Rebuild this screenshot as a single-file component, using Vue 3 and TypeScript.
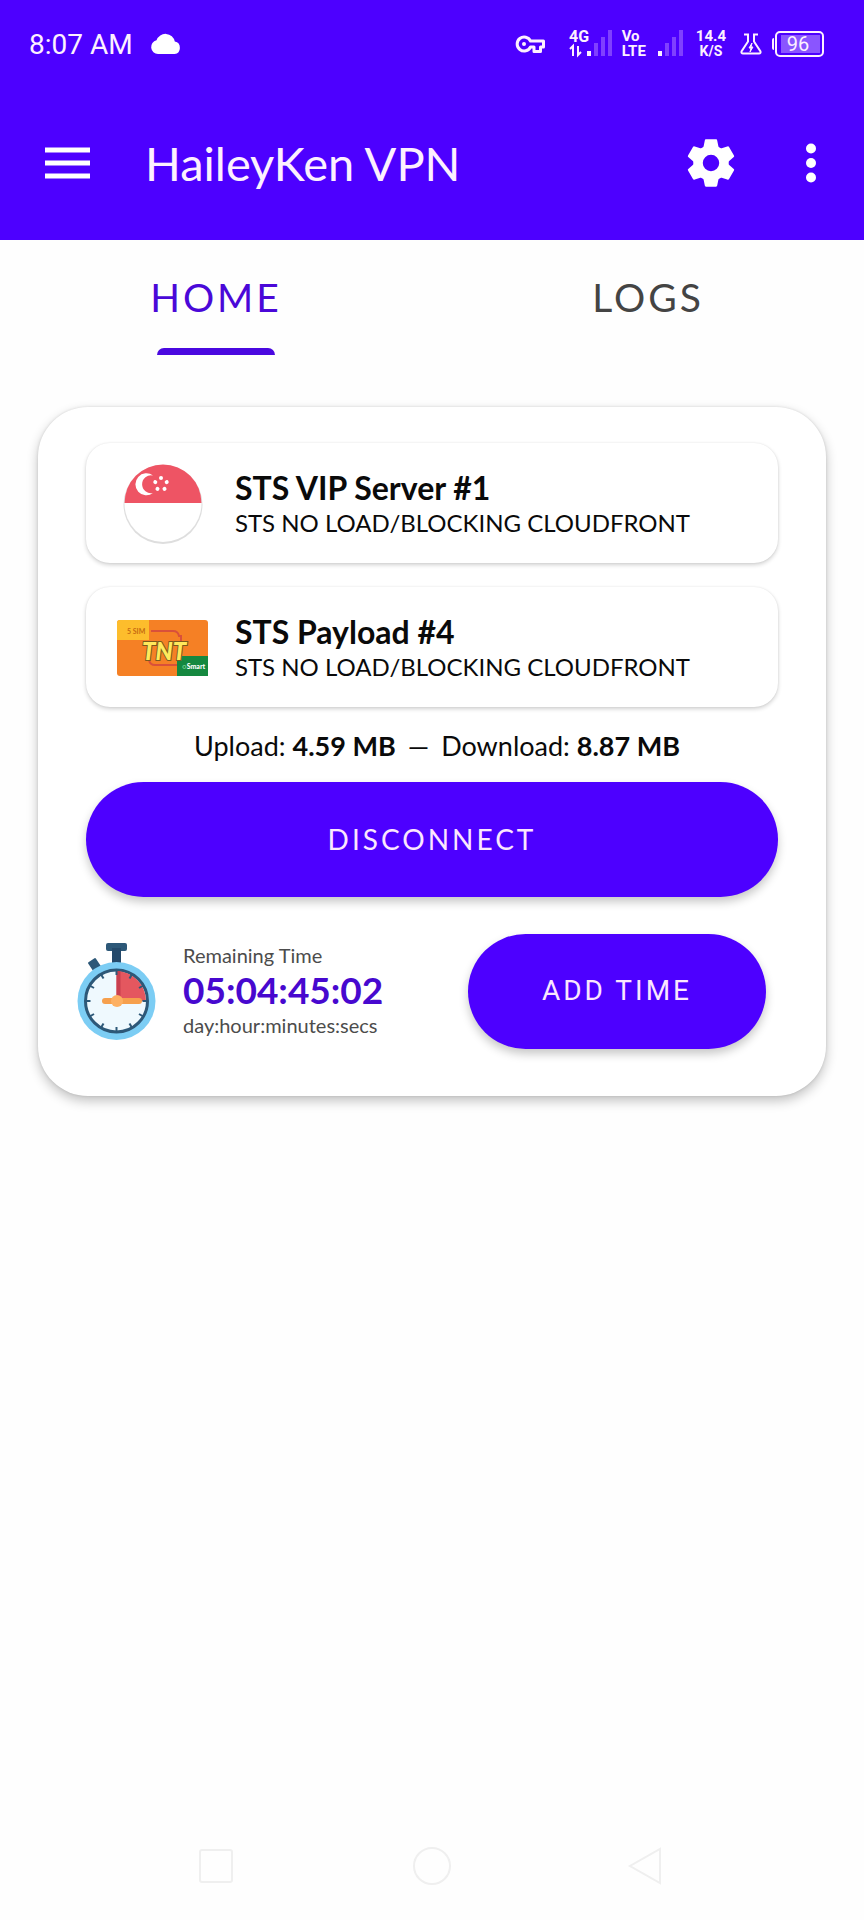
<script setup lang="ts">
import { ref } from 'vue'

type Tab = 'HOME' | 'LOGS'

const tabs: Tab[] = ['HOME', 'LOGS']
const active = ref<Tab>('HOME')
const upload = '4.59 MB'
const download = '8.87 MB'
const remaining = '05:04:45:02'
const teeth = [0, 60, 120, 180, 240, 300]
const ticks = Array.from({ length: 12 }, (_, i) => i * 30)
const stars = [0, 72, 144, 216, 288]
</script>

<template>
  <div class="screen">
    <header class="top">
      <div class="status">
        <span class="clock">8:07 AM</span>
        <svg class="cloud" viewBox="0 0 30 20" width="30" height="20" aria-hidden="true">
          <path d="M7 20a7 7 0 0 1-1.500-13.800A9.500 9.500 0 0 1 23.800 7.600 6.300 6.300 0 0 1 23.600 20z" fill="currentColor" />
        </svg>
        <span class="spacer"></span>
        <svg class="key" viewBox="0 0 30 20" width="30" height="20" aria-hidden="true">
          <path d="M15.500 7A7 7 0 1 0 15.500 13H19V17.500H25.500V13H28.500V7z" fill="none" stroke="currentColor" stroke-width="3" stroke-linejoin="round" />
          <circle cx="9" cy="10" r="2" fill="currentColor" />
        </svg>
        <svg class="net" viewBox="0 0 44 28" width="44" height="28" role="img" aria-label="4G signal">
          <text x="0" y="12" class="mini">4G</text>
          <path d="M1 19l3-3v10M9 16v9l3-3" fill="none" stroke="currentColor" stroke-width="2" />
          <rect x="18" y="21" width="4" height="5" fill="currentColor" />
          <g class="dim">
            <rect x="25" y="13" width="4" height="13" />
            <rect x="32" y="7" width="4" height="19" />
            <rect x="39" y="0" width="4" height="26" />
          </g>
        </svg>
        <span class="stack volte"><span>Vo</span><span>LTE</span></span>
        <svg class="bars" viewBox="0 0 26 28" width="26" height="28" role="img" aria-label="Signal">
          <rect x="0" y="21" width="4" height="5" fill="currentColor" />
          <g class="dim">
            <rect x="7" y="13" width="4" height="13" />
            <rect x="14" y="7" width="4" height="19" />
            <rect x="21" y="0" width="4" height="26" />
          </g>
        </svg>
        <span class="stack speed"><span>14.4</span><small>K/S</small></span>
        <svg class="flask" viewBox="0 0 22 22" width="22" height="22" aria-hidden="true">
          <path d="M4 1.500h4v7L1.500 18.500q-.5 2 1.500 2h16q2 0 1.500-2L14 8.500v-7h4" fill="none" stroke="currentColor" stroke-width="2" />
          <path d="M12 10l-3 5h2l-1 4 3-5h-2z" fill="currentColor" stroke="currentColor" stroke-width="1" />
        </svg>
        <svg class="battery" viewBox="0 0 53 26" width="53" height="26" role="img" aria-label="Battery 96">
          <path d="M3 7q-2 0-2 2v8q0 2 2 2z" fill="currentColor" />
          <rect x="5" y="1" width="47" height="24" rx="4" fill="none" stroke="currentColor" stroke-width="2" />
          <rect x="10" y="4" width="39" height="18" fill="#8a55ff" />
          <text x="27" y="20" text-anchor="middle" class="level">96</text>
        </svg>
      </div>
      <div class="appbar">
        <button class="icon menu" aria-label="Open menu">
          <svg viewBox="0 0 46 32" width="46" height="32"><path d="M0 3h45M0 16h45M0 29h45" stroke="currentColor" stroke-width="5" /></svg>
        </button>
        <h1>HaileyKen VPN</h1>
        <button class="icon" aria-label="Settings">
          <svg viewBox="-73 -73 146 146" width="48" height="48">
            <path v-for="a in teeth" :key="a" d="M-15-72H15Q19-72 19-68L24-43H-24L-19-68Q-19-72-15-72z" :transform="`rotate(${a})`" fill="currentColor" />
            <circle r="39.500" fill="none" stroke="currentColor" stroke-width="29" />
          </svg>
        </button>
        <button class="icon more" aria-label="More options">
          <svg viewBox="0 0 12 40" width="12" height="40" fill="currentColor">
            <circle cx="6" cy="5.500" r="5" /><circle cx="6" cy="20" r="5" /><circle cx="6" cy="34.500" r="5" />
          </svg>
        </button>
      </div>
    </header>

    <nav class="tabs" role="tablist">
      <button v-for="t in tabs" :key="t" role="tab" class="tab" :class="{ active: active === t }" :aria-selected="active === t" @click="active = t">
        <span>{{ t }}</span>
      </button>
    </nav>

    <main class="card">
      <button class="row">
        <svg class="thumb" viewBox="86 38 96 96" width="96" height="96" aria-hidden="true">
          <circle cx="134" cy="87.500" r="39.500" fill="#dedede" />
          <circle cx="134" cy="86.500" r="38.500" fill="#fff" />
          <path d="M95.500 86a38.500 38.500 0 0 1 77 0z" fill="#ee5464" />
          <path d="M124 58.500a11 11 0 1 0 0 17.600 9 9 0 1 1 0-17.600z" fill="#fff" />
          <circle v-for="a in stars" :key="a" cx="132" cy="61" r="2" :transform="`rotate(${a} 132 67)`" fill="#fff" />
        </svg>
        <span class="info"><strong>STS VIP Server #1</strong><span>STS NO LOAD/BLOCKING CLOUDFRONT</span></span>
      </button>
      <button class="row">
        <svg class="thumb" viewBox="0 -1 96 96" width="96" height="96" aria-hidden="true">
          <rect x="2" y="20" width="91" height="56" rx="3" fill="#f58025" />
          <path d="M5 20h29v20H2V23q0-3 3-3z" fill="#fdbd2c" />
          <text x="12" y="34" class="sim">5 SIM</text>
          <path d="M36 31h22q5 0 6 5h2v25q0 4-4 4H40q-5 0-6-5" fill="none" stroke="#d9503a" stroke-width="2" />
          <path d="M62 56h31v20H62z" fill="#15883f" />
          <text x="27" y="60" class="tnt">TNT</text>
          <text x="67" y="69" class="smart"><tspan class="ring">○</tspan>Smart</text>
        </svg>
        <span class="info"><strong>STS Payload #4</strong><span>STS NO LOAD/BLOCKING CLOUDFRONT</span></span>
      </button>

      <p class="traffic">
        <span>Upload: <b>{{ upload }}</b></span><span>—</span><span>Download: <b>{{ download }}</b></span>
      </p>

      <button class="pill">DISCONNECT</button>

      <section class="time">
        <svg viewBox="0 0 80 98" width="80" height="98" aria-hidden="true">
          <path d="M12 20l6-4 6 9-6 4z" fill="#2d5878" stroke="#2d5878" stroke-width="2" stroke-linejoin="round" />
          <rect x="29" y="0" width="21" height="8" rx="2" fill="#2d5878" />
          <rect x="35" y="5" width="9" height="16" fill="#24496a" />
          <circle cx="39.500" cy="58" r="39" fill="#7ccdf4" />
          <circle cx="39.500" cy="58" r="31" fill="#eff9fe" stroke="#2d5878" stroke-width="3" />
          <path d="M39.500 28a30 30 0 0 1 29.500 30H39.500z" fill="#e4575f" />
          <path d="M39.500 28h4v30h-4z" fill="#c9404f" />
          <path v-for="a in ticks" :key="a" d="M39.500 27v5" :transform="`rotate(${a} 39.500 58)`" stroke="#2d5878" stroke-width="2" />
          <path d="M28 58h34" stroke="#f6a04d" stroke-width="6" stroke-linecap="round" />
          <circle cx="40" cy="58" r="6" fill="#fdb062" />
        </svg>
        <div class="readout">
          <span>Remaining Time</span>
          <strong>{{ remaining }}</strong>
          <span>day:hour:minutes:secs</span>
        </div>
        <button class="pill add">ADD TIME</button>
      </section>
    </main>

    <footer class="nav">
      <button aria-label="Recent apps"><svg viewBox="0 0 40 40" width="40" height="40"><rect x="4" y="4" width="32" height="32" rx="2" /></svg></button>
      <button aria-label="Home"><svg viewBox="0 0 40 40" width="40" height="40"><circle cx="20" cy="20" r="18" /></svg></button>
      <button aria-label="Back"><svg viewBox="0 0 40 40" width="40" height="40"><path d="M32 3v34L2 20z" /></svg></button>
    </footer>
  </div>
</template>

<style>
body {
  margin: 0;
  background: #fefefe;
}
</style>

<style scoped>
.screen {
  min-height: 100vh;
  display: flex;
  flex-direction: column;
  font-family: Lato, 'Open Sans', sans-serif;
  color: #0a0a0a;
}
button {
  font: inherit;
  color: inherit;
  border: 0;
  padding: 0;
  background: none;
  cursor: pointer;
}
svg {
  display: block;
  flex: none;
  overflow: visible;
}
.top {
  background: #4d00ff;
  color: #fdf0ff;
}
.status {
  display: flex;
  align-items: center;
  height: 88px;
  padding: 0 40px 0 29px;
  font-family: Roboto, sans-serif;
}
.clock {
  font-size: 28px;
}
.cloud {
  margin-left: 18px;
}
.cloud,
.icon {
  color: #fff;
}
.spacer {
  flex: 1;
}
.net {
  margin-left: 24px;
}
.mini {
  font: 700 16px Roboto, sans-serif;
  fill: currentColor;
}
.dim {
  fill: #8040ff;
}
.stack {
  display: flex;
  flex-direction: column;
  align-items: center;
  font-size: 15px;
  line-height: 15px;
  font-weight: 700;
}
.volte {
  margin-left: 9px;
  align-items: flex-start;
}
.bars {
  margin-left: 12px;
}
.speed {
  margin-left: 12px;
}
.stack small {
  font-size: 14px;
}
.flask {
  margin-left: 14px;
}
.battery {
  margin-left: 9px;
}
.level {
  font: 20px Roboto, sans-serif;
  fill: currentColor;
}
.appbar {
  display: flex;
  align-items: center;
  height: 152px;
  padding: 0 47px 0 45px;
  box-sizing: border-box;
  padding-bottom: 2px;
}
h1 {
  flex: 1;
  margin: 0 0 0 54px;
  font-size: 47px;
  font-weight: 400;
}
.more {
  margin-left: 70px;
}
.tabs {
  display: flex;
}
.tab {
  flex: 1;
  height: 115px;
  display: flex;
  flex-direction: column;
  align-items: center;
  font-size: 39px;
  line-height: 48px;
  letter-spacing: 3px;
  color: #444;
}
.tab span {
  margin-top: 33px;
}
.active {
  color: #4a08d8;
}
.active::after {
  content: '';
  width: 118px;
  height: 7px;
  margin-top: auto;
  border-radius: 7px 7px 0 0;
  background: #4a08e0;
}
.card {
  margin: 52px 38px 0;
  padding: 36px 48px 47px;
  border-radius: 50px;
  background: #fff;
  box-shadow: 0 5px 12px rgba(0, 0, 0, 0.24), 0 0 3px rgba(0, 0, 0, 0.12);
}
.row {
  display: flex;
  align-items: center;
  width: 100%;
  height: 120px;
  margin-bottom: 24px;
  padding: 0 29px;
  gap: 24px;
  border-radius: 24px;
  background: #fff;
  box-shadow: 0 2px 4px rgba(0, 0, 0, 0.18), 0 0 2px rgba(0, 0, 0, 0.08);
  text-align: left;
}
.info {
  display: flex;
  flex-direction: column;
  font-size: 24px;
  line-height: 30px;
}
.info strong {
  font-size: 32px;
  line-height: 40px;
}
.sim {
  font: 700 7px Lato, sans-serif;
  fill: #c56a10;
}
.tnt {
  font: italic 900 24px Lato, sans-serif;
  fill: #ffe95c;
  stroke: #7a5a1c;
  stroke-width: 2px;
  paint-order: stroke;
}
.smart {
  font: 900 7px Lato, sans-serif;
  fill: #fff;
}
.ring {
  fill: #6fce8d;
}
.traffic {
  display: flex;
  justify-content: center;
  gap: 12px;
  margin: 0;
  padding-left: 10px;
  font-size: 27px;
  line-height: 30px;
}
.pill {
  display: block;
  width: 100%;
  height: 115px;
  margin-top: 21px;
  padding-bottom: 2px;
  border-radius: 58px;
  background: #4d00ff;
  color: #fbe6ff;
  font-size: 28px;
  letter-spacing: 3px;
  box-shadow: 0 5px 10px rgba(0, 0, 0, 0.22);
}
.time {
  display: flex;
  align-items: center;
  margin: 37px -9px 0;
}
.readout {
  flex: 1;
  display: flex;
  flex-direction: column;
  margin: 0 0 4px 26px;
  font-size: 20px;
  line-height: 30px;
  color: #4c4c4c;
}
.readout strong {
  font-size: 37px;
  line-height: 40px;
  color: #4708cf;
}
.add {
  width: 298px;
  margin: 0 21px 0 0;
  font-family: Roboto, sans-serif;
}
.nav {
  display: flex;
  justify-content: center;
  gap: 176px;
  margin-top: auto;
  padding-bottom: 34px;
}
.nav svg {
  fill: none;
  stroke: #efefef;
  stroke-width: 2;
}
</style>
